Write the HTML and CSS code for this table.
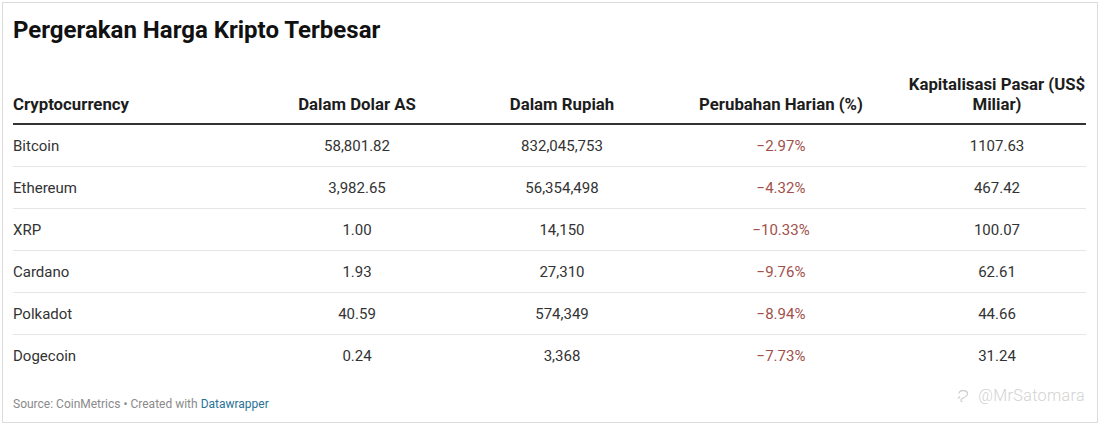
FILE: index.html
```html
<!DOCTYPE html>
<html lang="id">
<head>
<meta charset="utf-8">
<title>Pergerakan Harga Kripto Terbesar</title>
<link rel="stylesheet" href="styles.css">
</head>
<body>
<div class="chart">
  <h1 class="title">Pergerakan Harga Kripto Terbesar</h1>
  <table class="tbl">
    <colgroup>
      <col class="c1"><col class="c2"><col class="c3"><col class="c4"><col class="c5">
    </colgroup>
    <thead>
      <tr>
        <th class="left">Cryptocurrency</th>
        <th>Dalam Dolar AS</th>
        <th>Dalam Rupiah</th>
        <th>Perubahan Harian (%)</th>
        <th>Kapitalisasi Pasar (US$ Miliar)</th>
      </tr>
    </thead>
    <tbody>
      <tr><td class="left">Bitcoin</td><td>58,801.82</td><td>832,045,753</td><td class="neg">−2.97%</td><td>1107.63</td></tr>
      <tr><td class="left">Ethereum</td><td>3,982.65</td><td>56,354,498</td><td class="neg">−4.32%</td><td>467.42</td></tr>
      <tr><td class="left">XRP</td><td>1.00</td><td>14,150</td><td class="neg">−10.33%</td><td>100.07</td></tr>
      <tr><td class="left">Cardano</td><td>1.93</td><td>27,310</td><td class="neg">−9.76%</td><td>62.61</td></tr>
      <tr><td class="left">Polkadot</td><td>40.59</td><td>574,349</td><td class="neg">−8.94%</td><td>44.66</td></tr>
      <tr><td class="left">Dogecoin</td><td>0.24</td><td>3,368</td><td class="neg">−7.73%</td><td>31.24</td></tr>
    </tbody>
  </table>
  <div class="footer">Source: CoinMetrics • Created with <span class="link">Datawrapper</span></div>
  <div class="watermark">
    <svg class="wm-icon" width="12" height="15" viewBox="0 0 12 15" fill="none" stroke="#cccccc" stroke-width="1.1">
      <path d="M2 5.5 C2 2 9.5 1.5 10.5 5 C11.3 8 7.5 9.3 5.5 10.3 C3.5 11.3 3.3 13.5 5.5 13.8"/>
      <path d="M1 10.5 L3 8.5"/>
    </svg>
    <span>@MrSatomara</span>
  </div>
</div>
</body>
</html>
```
FILE: styles.css
```css
html, body {
  margin: 0;
  padding: 0;
  background: #fff;
}
body {
  font-family: Roboto, "Liberation Sans", sans-serif;
  color: #333;
}
.chart {
  position: relative;
  margin: 2px 0 0 2px;
  width: 1074px;
  height: 399px;
  padding: 10px;
  border: 1px solid #dcdcdc;
}
.title {
  margin: 3px 0 0;
  font-size: 24px;
  line-height: 28px;
  font-weight: 700;
  color: #111;
}
.tbl {
  margin-top: 21px;
  width: 1073px;
  border-collapse: collapse;
  table-layout: fixed;
  font-size: 15px;
}
.c1 { width: 231px; }
.c2 { width: 226px; }
.c3 { width: 184px; }
.c4 { width: 254px; }
.c5 { width: 178px; }
.tbl th {
  padding: 9px 0 9px;
  line-height: 20px;
  font-size: 16.8px;
  font-weight: 700;
  color: #1d1d1d;
  text-align: center;
  vertical-align: bottom;
  border-bottom: 2px solid #333;
}
.tbl td {
  height: 41px;
  padding: 0;
  line-height: 20px;
  text-align: center;
  vertical-align: middle;
  border-bottom: 1px solid #e6e6e6;
  color: #333;
}
.tbl tbody tr:last-child td {
  border-bottom: none;
}
.tbl .left {
  text-align: left;
}
.tbl td.neg {
  color: #a2504b;
}
.footer {
  margin-top: 20px;
  font-size: 12px;
  line-height: 16px;
  color: #8a8a8a;
}
.link {
  color: #2a7396;
}
.watermark {
  position: absolute;
  right: 12px;
  bottom: 17px;
  display: flex;
  align-items: center;
  gap: 9px;
  font-size: 16px;
  font-weight: 300;
  color: #d2d2d2;
  letter-spacing: 0.4px;
}
.wm-icon {
  display: block;
}
```
